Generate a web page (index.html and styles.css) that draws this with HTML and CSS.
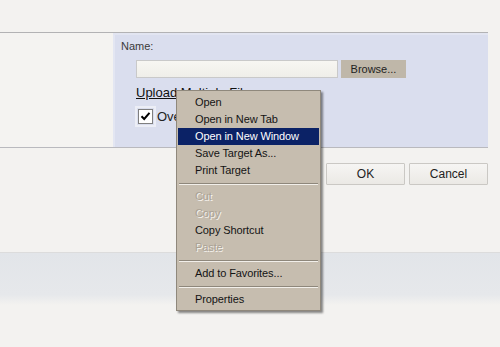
FILE: index.html
```html
<!doctype html>
<html lang="en">
<head>
<meta charset="utf-8" />
<title>Upload files</title>
<link rel="stylesheet" href="styles.css">
</head>
<body>

<div class="top"></div>

<div class="dialog">
	<div class="side"></div>
	<div class="form">
		<div class="label">Name:</div>
		<div class="file-row">
			<span class="file-input"></span>
			<span class="browse">Browse...</span>
		</div>
		<a class="upload" href="#">Upload Multiple Files</a>
		<label class="overwrite">
			<span class="check">
				<svg width="11" height="11" viewBox="0 0 11 11"><path d="M1.5 5.2 L4.2 8 L9.5 1.8" fill="none" stroke="#000" stroke-width="2"/></svg>
			</span>
			Overwrite existing files
		</label>
	</div>
</div>

<div class="actions">
	<button class="btn">OK</button>
	<button class="btn">Cancel</button>
</div>

<div class="band"></div>

<ul class="menu">
	<li>Open</li>
	<li>Open in New Tab</li>
	<li class="active">Open in New Window</li>
	<li>Save Target As...</li>
	<li>Print Target</li>
	<li class="sep"></li>
	<li class="off">Cut</li>
	<li class="off">Copy</li>
	<li>Copy Shortcut</li>
	<li class="off">Paste</li>
	<li class="sep"></li>
	<li>Add to Favorites...</li>
	<li class="sep"></li>
	<li>Properties</li>
</ul>

</body>
</html>
```

FILE: styles.css
```css
:root {
	--page: #f3f2f0;
	--panel: #dadeee;
	--menu: #c6bdaf;
	--hilite: #0b2266;
	font-family: "Liberation Sans", Arial, sans-serif;
	font-size: 11px;
	color: #1a1a1a;
}

body, html {
	margin: 0;
	padding: 0;
	background: var(--page);
}

.top {
	height: 32px;
}

.dialog {
	display: flex;
	width: 488px;
	height: 114px;
	border-top: 1px solid #b2b2b4;
	border-bottom: 1px solid #b9b9be;
}

.side {
	width: 113px;
	background: #f4f3f1;
}

.form {
	flex: 1;
	background: var(--panel);
	border-left: 2px solid #e3e6f2;
	border-top: 2px solid #e2e5f1;
	padding: 5px 0 0 6px;
}

.label {
	color: #3a3a3a;
	line-height: 13px;
}

.file-row {
	display: flex;
	gap: 3px;
	margin: 7px 0 0 15px;
	height: 18px;
}

.file-input {
	width: 200px;
	background: linear-gradient(#f7f6f2, #efeee9);
	border: 1px solid #c9c9c9;
}

.browse {
	width: 65px;
	background: #bfb7a9;
	display: flex;
	align-items: center;
	justify-content: center;
	color: #222;
}

.upload {
	display: block;
	margin: 8px 0 0 15px;
	font-size: 13px;
	line-height: 14px;
	color: #111;
	text-decoration: underline;
	width: max-content;
}

.overwrite {
	display: flex;
	align-items: center;
	gap: 2px;
	margin: 7px 0 0 14px;
	font-size: 13px;
	color: #222;
}

.check {
	width: 13px;
	height: 13px;
	border: 1px solid #7f7f7f;
	background: #fff;
	outline: 2px solid #eceef6;
	outline-offset: 1px;
	margin: 2px 2px 2px 3px;
	display: flex;
	align-items: center;
	justify-content: center;
}

.actions {
	display: flex;
	justify-content: flex-end;
	gap: 4px;
	width: 488px;
	margin-top: 15px;
}

.btn {
	width: 79px;
	height: 22px;
	padding: 0;
	font: inherit;
	font-size: 12px;
	color: #222;
	background: linear-gradient(#f6f5f3, #ebe9e5);
	border: 1px solid #cac8c4;
	border-radius: 1px;
}

.band {
	margin-top: 67px;
	height: 52px;
	border-top: 1px solid #dcdcdc;
	background: linear-gradient(#e2e5e9, #e6e8eb 80%, var(--page));
}

/* context menu */

.menu {
	position: absolute;
	left: 176px;
	top: 90px;
	width: 141px;
	margin: 0;
	padding: 3px 1px 2px;
	list-style: none;
	background: var(--menu);
	border: 1px solid #8f887c;
	box-shadow: 2px 2px 2px rgba(0, 0, 0, .45);
	font-size: 11px;
	letter-spacing: -0.1px;
}

.menu li {
	height: 17px;
	line-height: 17px;
	padding-left: 17px;
	color: #141414;
	white-space: nowrap;
}

.menu li.active {
	background: var(--hilite);
	color: #fff;
}

.menu li.off {
	color: #aaa295;
	text-shadow: 1px 1px 0 #f6f3ee;
}

.menu li.sep {
	height: 0;
	padding: 0;
	margin: 4px 1px 3px;
	border-top: 1px solid #8e877b;
	border-bottom: 1px solid #f2efea;
}
```
